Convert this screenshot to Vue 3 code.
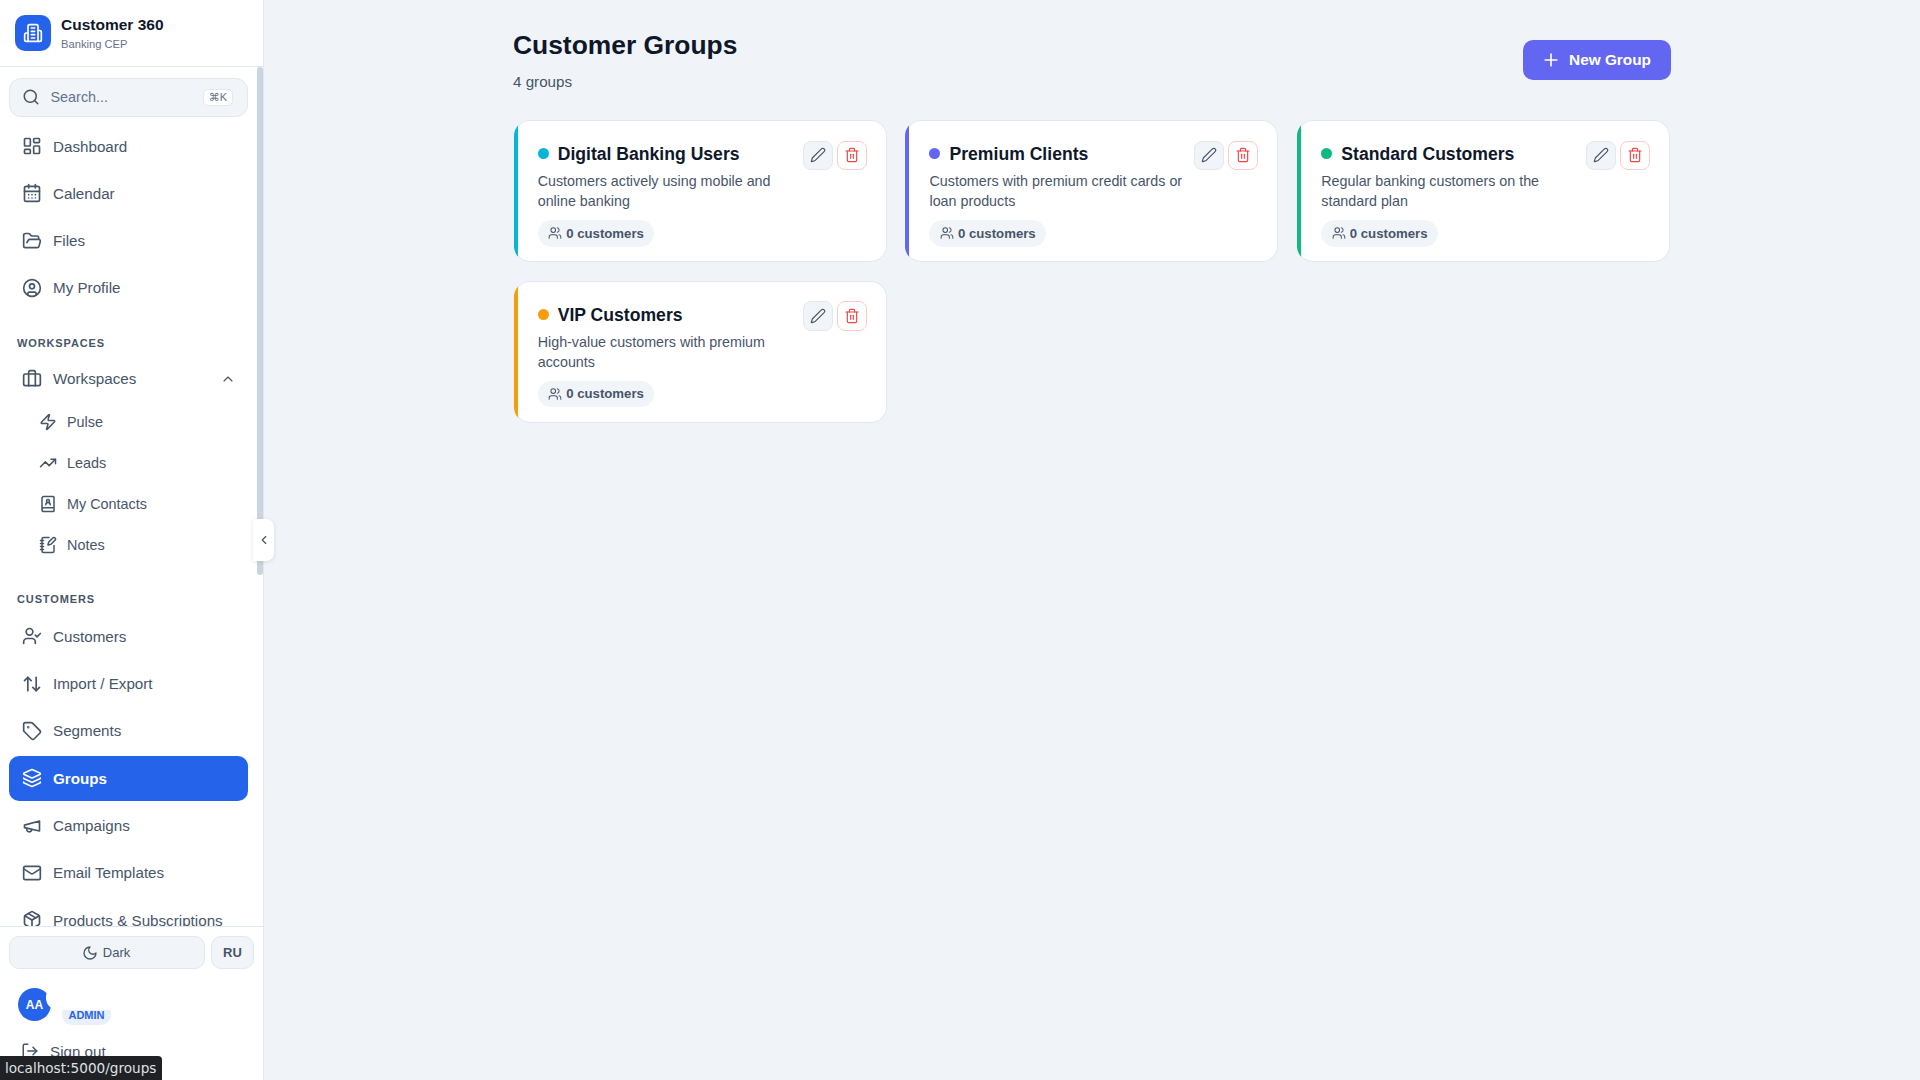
<script setup>
const icons = {
  building: '<path d="M6 22V4a2 2 0 0 1 2-2h8a2 2 0 0 1 2 2v18Z"/><path d="M6 12H4a2 2 0 0 0-2 2v6a2 2 0 0 0 2 2h2"/><path d="M18 9h2a2 2 0 0 1 2 2v9a2 2 0 0 1-2 2h-2"/><path d="M10 6h4"/><path d="M10 10h4"/><path d="M10 14h4"/><path d="M10 18h4"/>',
  search: '<circle cx="11" cy="11" r="8"/><path d="m21 21-4.3-4.3"/>',
  dashboard: '<rect x="3" y="3" width="7" height="9" rx="1"/><rect x="14" y="3" width="7" height="5" rx="1"/><rect x="14" y="12" width="7" height="9" rx="1"/><rect x="3" y="16" width="7" height="5" rx="1"/>',
  calendar: '<path d="M8 2v4"/><path d="M16 2v4"/><rect x="3" y="4" width="18" height="18" rx="2"/><path d="M3 10h18"/><path d="M8 14h.01"/><path d="M12 14h.01"/><path d="M16 14h.01"/><path d="M8 18h.01"/><path d="M12 18h.01"/><path d="M16 18h.01"/>',
  folder: '<path d="m6 14 1.5-2.9A2 2 0 0 1 9.24 10H20a2 2 0 0 1 1.94 2.5l-1.54 6a2 2 0 0 1-1.95 1.5H4a2 2 0 0 1-2-2V5a2 2 0 0 1 2-2h3.9a2 2 0 0 1 1.69.9l.81 1.2a2 2 0 0 0 1.67.9H18a2 2 0 0 1 2 2v2"/>',
  profile: '<circle cx="12" cy="12" r="10"/><circle cx="12" cy="10" r="3"/><path d="M7 20.662V19a2 2 0 0 1 2-2h6a2 2 0 0 1 2 2v1.662"/>',
  briefcase: '<path d="M16 20V4a2 2 0 0 0-2-2h-4a2 2 0 0 0-2 2v16"/><rect x="2" y="6" width="20" height="14" rx="2"/>',
  chevronUp: '<path d="m18 15-6-6-6 6"/>',
  chevronLeft: '<path d="m15 18-6-6 6-6"/>',
  zap: '<path d="M4 14a1 1 0 0 1-.78-1.63l9.9-10.2a.5.5 0 0 1 .86.46l-1.92 6.02A1 1 0 0 0 13 10h7a1 1 0 0 1 .78 1.63l-9.9 10.2a.5.5 0 0 1-.86-.46l1.92-6.02A1 1 0 0 0 11 14z"/>',
  trending: '<polyline points="22 7 13.5 15.5 8.5 10.5 2 17"/><polyline points="16 7 22 7 22 13"/>',
  book: '<path d="M15 13a3 3 0 1 0-6 0"/><path d="M4 19.5v-15A2.5 2.5 0 0 1 6.5 2H19a1 1 0 0 1 1 1v18a1 1 0 0 1-1 1H6.5a1 1 0 0 1 0-5H20"/><circle cx="12" cy="8" r="2"/>',
  notebook: '<path d="M13.4 2H6a2 2 0 0 0-2 2v16a2 2 0 0 0 2 2h12a2 2 0 0 0 2-2v-7.4"/><path d="M2 6h4"/><path d="M2 10h4"/><path d="M2 14h4"/><path d="M2 18h4"/><path d="M21.378 5.626a1 1 0 1 0-3.004-3.004l-5.01 5.012a2 2 0 0 0-.506.854l-.837 2.87a.5.5 0 0 0 .62.62l2.87-.837a2 2 0 0 0 .854-.506z"/>',
  userCheck: '<path d="M16 21v-2a4 4 0 0 0-4-4H6a4 4 0 0 0-4 4v2"/><circle cx="9" cy="7" r="4"/><polyline points="16 11 18 13 22 9"/>',
  arrows: '<path d="m21 16-4 4-4-4"/><path d="M17 20V4"/><path d="m3 8 4-4 4 4"/><path d="M7 4v16"/>',
  tag: '<path d="M12.586 2.586A2 2 0 0 0 11.172 2H4a2 2 0 0 0-2 2v7.172a2 2 0 0 0 .586 1.414l8.704 8.704a2.426 2.426 0 0 0 3.42 0l6.58-6.58a2.426 2.426 0 0 0 0-3.42z"/><circle cx="7.5" cy="7.5" r=".5" fill="currentColor"/>',
  layers: '<path d="M12.83 2.18a2 2 0 0 0-1.66 0L2.6 6.08a1 1 0 0 0 0 1.83l8.58 3.91a2 2 0 0 0 1.66 0l8.58-3.9a1 1 0 0 0 0-1.83z"/><path d="M2 12a1 1 0 0 0 .58.91l8.6 3.91a2 2 0 0 0 1.65 0l8.58-3.9A1 1 0 0 0 22 12"/><path d="M2 17a1 1 0 0 0 .58.91l8.6 3.91a2 2 0 0 0 1.65 0l8.58-3.9A1 1 0 0 0 22 17"/>',
  megaphone: '<path d="m3 11 18-5v12L3 14v-3z"/><path d="M11.6 16.8a3 3 0 1 1-5.8-1.6"/>',
  mail: '<rect x="2" y="4" width="20" height="16" rx="2"/><path d="m22 7-8.97 5.7a1.94 1.94 0 0 1-2.06 0L2 7"/>',
  package: '<path d="M11 21.73a2 2 0 0 0 2 0l7-4A2 2 0 0 0 21 16V8a2 2 0 0 0-1-1.73l-7-4a2 2 0 0 0-2 0l-7 4A2 2 0 0 0 3 8v8a2 2 0 0 0 1 1.73z"/><path d="M12 22V12"/><polyline points="3.29 7 12 12 20.71 7"/><path d="m7.5 4.27 9 5.15"/>',
  moon: '<path d="M12 3a6 6 0 0 0 9 9 9 9 0 1 1-9-9Z"/>',
  logout: '<path d="M9 21H5a2 2 0 0 1-2-2V5a2 2 0 0 1 2-2h4"/><polyline points="16 17 21 12 16 7"/><line x1="21" y1="12" x2="9" y2="12"/>',
  users: '<path d="M16 21v-2a4 4 0 0 0-4-4H6a4 4 0 0 0-4 4v2"/><circle cx="9" cy="7" r="4"/><path d="M22 21v-2a4 4 0 0 0-3-3.87"/><path d="M16 3.13a4 4 0 0 1 0 7.75"/>',
  pen: '<path d="M21.174 6.812a1 1 0 0 0-3.986-3.987L3.842 16.174a2 2 0 0 0-.5.83l-1.321 4.352a.5.5 0 0 0 .623.622l4.353-1.32a2 2 0 0 0 .83-.497z"/>',
  trash: '<path d="M3 6h18"/><path d="M19 6v14c0 1-1 2-2 2H7c-1 0-2-1-2-2V6"/><path d="M8 6V4c0-1 1-2 2-2h4c1 0 2 1 2 2v2"/><line x1="10" y1="11" x2="10" y2="17"/><line x1="14" y1="11" x2="14" y2="17"/>',
  plus: '<path d="M5 12h14"/><path d="M12 5v14"/>'
}

const topNav = [
  { label: 'Dashboard', icon: 'dashboard' },
  { label: 'Calendar', icon: 'calendar' },
  { label: 'Files', icon: 'folder' },
  { label: 'My Profile', icon: 'profile' }
]
const workspaceNav = [
  { label: 'Pulse', icon: 'zap' },
  { label: 'Leads', icon: 'trending' },
  { label: 'My Contacts', icon: 'book' },
  { label: 'Notes', icon: 'notebook' }
]
const customerNav = [
  { label: 'Customers', icon: 'userCheck' },
  { label: 'Import / Export', icon: 'arrows' },
  { label: 'Segments', icon: 'tag' },
  { label: 'Groups', icon: 'layers', active: true },
  { label: 'Campaigns', icon: 'megaphone' },
  { label: 'Email Templates', icon: 'mail' },
  { label: 'Products & Subscriptions', icon: 'package' }
]
const groups = [
  { name: 'Digital Banking Users', desc: 'Customers actively using mobile and online banking', color: '#06b6d4' },
  { name: 'Premium Clients', desc: 'Customers with premium credit cards or loan products', color: '#6366f1' },
  { name: 'Standard Customers', desc: 'Regular banking customers on the standard plan', color: '#10b981' },
  { name: 'VIP Customers', desc: 'High-value customers with premium accounts', color: '#f59e0b' }
]
</script>

<template>
  <div class="app">
    <aside class="sidebar">
      <header class="brand">
        <div class="logo">
          <svg class="ic" width="20" height="20" viewBox="0 0 24 24" v-html="icons.building"></svg>
        </div>
        <div class="brand-text">
          <div class="brand-name">Customer 360</div>
          <div class="brand-sub">Banking CEP</div>
        </div>
      </header>

      <nav class="nav">
        <div class="search">
          <svg class="ic" width="18" height="18" viewBox="0 0 24 24" v-html="icons.search"></svg>
          <span class="search-text">Search...</span>
          <kbd class="kbd">⌘K</kbd>
        </div>

        <a v-for="item in topNav" :key="item.label" class="item">
          <svg class="ic" width="20" height="20" viewBox="0 0 24 24" v-html="icons[item.icon]"></svg>
          <span>{{ item.label }}</span>
        </a>

        <div class="section first">WORKSPACES</div>
        <a class="item">
          <svg class="ic" width="20" height="20" viewBox="0 0 24 24" v-html="icons.briefcase"></svg>
          <span>Workspaces</span>
          <svg class="ic chev" width="16" height="16" viewBox="0 0 24 24" v-html="icons.chevronUp"></svg>
        </a>
        <div class="subs">
          <a v-for="item in workspaceNav" :key="item.label" class="sub">
            <svg class="ic" width="18" height="18" viewBox="0 0 24 24" v-html="icons[item.icon]"></svg>
            <span>{{ item.label }}</span>
          </a>
        </div>

        <div class="section second">CUSTOMERS</div>
        <a v-for="item in customerNav" :key="item.label" class="item tall" :class="{ active: item.active }">
          <svg class="ic" width="20" height="20" viewBox="0 0 24 24" v-html="icons[item.icon]"></svg>
          <span>{{ item.label }}</span>
        </a>

        <div class="thumb"></div>
      </nav>

      <footer class="foot">
        <div class="foot-btns">
          <button class="btn dark">
            <svg class="ic" width="16" height="16" viewBox="0 0 24 24" v-html="icons.moon"></svg>
            Dark
          </button>
          <button class="btn ru">RU</button>
        </div>
        <div class="user">
          <div class="avatar">AA</div>
          <div class="user-mask"></div>
          <span class="role">ADMIN</span>
        </div>
        <a class="signout">
          <svg class="ic" width="18" height="18" viewBox="0 0 24 24" v-html="icons.logout"></svg>
          <span>Sign out</span>
        </a>
      </footer>
    </aside>

    <button class="collapse" aria-label="Collapse sidebar">
      <svg class="ic" width="14" height="14" viewBox="0 0 24 24" v-html="icons.chevronLeft"></svg>
    </button>

    <main class="main">
      <div class="container">
        <div class="head">
          <div>
            <h1 class="title">Customer Groups</h1>
            <p class="count">4 groups</p>
          </div>
          <button class="new">
            <svg class="ic" width="20" height="20" viewBox="0 0 24 24" v-html="icons.plus"></svg>
            New Group
          </button>
        </div>

        <div class="grid">
          <article v-for="g in groups" :key="g.name" class="card">
            <span class="accent" :style="{ background: g.color }"></span>
            <div class="card-body">
              <div class="card-title">
                <span class="dot" :style="{ background: g.color }"></span>
                <h3>{{ g.name }}</h3>
              </div>
              <p class="desc">{{ g.desc }}</p>
              <span class="pill">
                <svg class="ic thin" width="14" height="14" viewBox="0 0 24 24" v-html="icons.users"></svg>
                0 customers
              </span>
            </div>
            <div class="actions">
              <button class="act edit">
                <svg class="ic thin" width="16" height="16" viewBox="0 0 24 24" v-html="icons.pen"></svg>
              </button>
              <button class="act del">
                <svg class="ic thin" width="16" height="16" viewBox="0 0 24 24" v-html="icons.trash"></svg>
              </button>
            </div>
          </article>
        </div>
      </div>
    </main>

    <div class="status">localhost:5000/groups</div>
  </div>
</template>

<style>
html, body { margin: 0; height: 100%; overflow: hidden; }
</style>

<style scoped>
.app {
  display: flex;
  height: 100vh;
  position: relative;
  overflow: hidden;
  background: #f0f4f9;
  font-family: "Liberation Sans", Arial, sans-serif;
  color: #475569;
}
.ic {
  fill: none;
  stroke: currentColor;
  stroke-width: 2;
  stroke-linecap: round;
  stroke-linejoin: round;
  flex-shrink: 0;
}
.ic.thin { stroke-width: 1.75; }
.sidebar {
  width: 264px;
  flex-shrink: 0;
  box-sizing: border-box;
  background: #fff;
  border-right: 1px solid #e2e8f0;
  display: flex;
  flex-direction: column;
  overflow: hidden;
}
.brand {
  height: 67px;
  box-sizing: border-box;
  border-bottom: 1px solid #e2e8f0;
  display: flex;
  align-items: center;
  gap: 10px;
  padding: 1px 15px 0;
  flex-shrink: 0;
}
.logo {
  width: 36px;
  height: 36px;
  border-radius: 10px;
  background: #2563eb;
  color: #fff;
  display: flex;
  align-items: center;
  justify-content: center;
  margin-top: -1px;
  flex-shrink: 0;
}
.brand-name { font-size: 15.5px; font-weight: 700; color: #0f172a; line-height: 18px; }
.brand-sub { font-size: 11.2px; color: #64748b; line-height: 14px; margin-top: 3px; }

.nav {
  position: relative;
  flex: 1;
  min-height: 0;
  overflow: hidden;
  padding: 11px 15px 0 9px;
}
.thumb {
  position: absolute;
  top: 0;
  right: 0;
  width: 6px;
  height: 508px;
  border-radius: 3px;
  background: #cbd5e1;
}
.search {
  height: 39px;
  box-sizing: border-box;
  display: flex;
  align-items: center;
  gap: 10.5px;
  padding: 0 14px 1px 12px;
  margin-bottom: 6.5px;
  background: #f1f5f9;
  border: 1px solid #e2e8f0;
  border-radius: 12px;
  font-size: 14.4px;
  color: #64748b;
}
.search .ic { color: #475569; }
.search-text { flex: 1; }
.kbd {
  box-sizing: border-box;
  width: 30px;
  height: 17px;
  display: flex;
  align-items: center;
  justify-content: center;
  background: #fff;
  border: 1px solid #e2e8f0;
  border-radius: 5px;
  font-family: "Liberation Sans", "DejaVu Sans", sans-serif;
  font-size: 11px;
  color: #64748b;
}
.item {
  height: 45.28px;
  box-sizing: border-box;
  display: flex;
  align-items: center;
  gap: 11px;
  padding: 0 13px;
  margin-bottom: 2px;
  border-radius: 10px;
  font-size: 15.2px;
  color: #475569;
}
.item.tall { height: 45.33px; }
.item.active {
  background: #2563eb;
  color: #fff;
  font-weight: 700;
}
.chev { margin-left: auto; margin-right: -1px; stroke-width: 1.75; }
.subs { margin-top: -0.5px; }
.sub {
  height: 39px;
  box-sizing: border-box;
  display: flex;
  align-items: center;
  gap: 10px;
  padding-left: 30px;
  margin-bottom: 2px;
  border-radius: 8px;
  font-size: 14.4px;
  color: #475569;
}
.section {
  font-size: 11px;
  font-weight: 700;
  letter-spacing: 0.08em;
  line-height: 14px;
  color: #475569;
  padding-left: 8px;
}
.section.first { margin: 25.8px 0 5.8px; }
.section.second { margin: 27.2px 0 7.44px; }

.foot {
  height: 154px;
  flex-shrink: 0;
  box-sizing: border-box;
  border-top: 1px solid #e2e8f0;
  padding: 9px 9px 0;
  overflow: hidden;
}
.foot-btns { display: flex; gap: 6px; }
.btn {
  height: 33px;
  box-sizing: border-box;
  display: flex;
  align-items: center;
  justify-content: center;
  gap: 5px;
  background: #f1f5f9;
  border: 1px solid #e2e8f0;
  border-radius: 10px;
  font-family: inherit;
  font-size: 13px;
  color: #475569;
  padding: 0;
}
.btn.dark { width: 196px; padding-right: 2px; }
.btn.ru { width: 43px; font-weight: 700; }
.user {
  position: relative;
  height: 37px;
  margin-top: 19px;
  padding-left: 9px;
}
.avatar {
  width: 33px;
  height: 33px;
  border-radius: 50%;
  background: #2563eb;
  color: #fff;
  font-size: 12px;
  font-weight: 700;
  display: flex;
  align-items: center;
  justify-content: center;
}
.user-mask {
  position: absolute;
  left: 37px;
  top: -3px;
  width: 90px;
  height: 25px;
  background: #fff;
  border-radius: 12px;
  z-index: 1;
}
.role {
  position: absolute;
  left: 53px;
  top: 16px;
  width: 49px;
  height: 21px;
  padding-top: 5px;
  box-sizing: border-box;
  border-radius: 10px;
  background: #e9effd;
  color: #2563eb;
  font-size: 11px;
  font-weight: 700;
  text-align: center;
}
.signout {
  display: flex;
  align-items: center;
  gap: 11px;
  margin-top: 17px;
  padding-left: 12px;
  font-size: 15.2px;
  color: #475569;
}

.collapse {
  position: absolute;
  left: 253px;
  top: 519px;
  width: 21px;
  height: 42px;
  padding: 0;
  border: none;
  background: #fff;
  border-radius: 0 8px 8px 0;
  box-shadow: 0 1px 4px rgba(15, 23, 42, 0.12);
  color: #475569;
  display: flex;
  align-items: center;
  justify-content: center;
}

.main {
  flex: 1;
  min-width: 0;
}
.container {
  width: 1158px;
  margin: 0 auto;
  padding-top: 28px;
}
.head {
  display: flex;
  align-items: center;
  justify-content: space-between;
  margin-bottom: 28.4px;
}
.title {
  margin: 0;
  font-size: 26.4px;
  line-height: 34px;
  font-weight: 700;
  color: #0f172a;
}
.count {
  margin: 10px 0 0;
  font-size: 15.2px;
  line-height: 20px;
  color: #475569;
}
.new {
  height: 40px;
  display: flex;
  align-items: center;
  gap: 8px;
  padding: 0 20px 1px 18.5px;
  border: none;
  border-radius: 10px;
  background: #6366f1;
  color: #fff;
  font-family: inherit;
  font-size: 15.36px;
  font-weight: 700;
}
.grid {
  display: grid;
  grid-template-columns: repeat(3, 373px);
  column-gap: 18.8px;
  row-gap: 19.2px;
  margin-left: 0.7px;
}
.card {
  position: relative;
  overflow: hidden;
  box-sizing: border-box;
  height: 141.6px;
  display: flex;
  gap: 12px;
  background: #fff;
  box-shadow: inset 0 0 0 1px #e2e8f0;
  border-radius: 16px;
  padding: 20.2px 20px 0 24px;
}
.accent {
  position: absolute;
  left: 0;
  top: 0;
  bottom: 0;
  width: 4px;
}
.card-body { flex: 1; min-width: 0; }
.card-title {
  display: flex;
  align-items: center;
  gap: 9px;
  height: 26px;
  box-sizing: border-box;
  padding-top: 2px;
}
.dot {
  width: 11px;
  height: 11px;
  border-radius: 50%;
  flex-shrink: 0;
  margin-top: -1.2px;
}
.card-title h3 {
  margin: 0;
  font-size: 17.6px;
  font-weight: 700;
  color: #0f172a;
}
.desc {
  margin: 4.4px 0 9.3px;
  font-size: 14.3px;
  line-height: 20px;
  color: #475569;
}
.pill {
  display: inline-flex;
  align-items: center;
  gap: 4px;
  height: 26.3px;
  box-sizing: border-box;
  padding: 0 10.5px 0.7px;
  border-radius: 14px;
  background: #f1f5f9;
  font-size: 13.2px;
  font-weight: 700;
  color: #475569;
}
.actions { display: flex; gap: 4px; flex-shrink: 0; align-items: flex-start; }
.act {
  width: 30px;
  height: 29.6px;
  box-sizing: border-box;
  padding: 0;
  border-radius: 8px;
  display: flex;
  align-items: center;
  justify-content: center;
}
.edit { background: #f1f5f9; border: 1px solid #e2e8f0; color: #475569; }
.del { background: #fff; border: 1px solid #fecaca; color: #ef4444; }

.status {
  position: absolute;
  left: 0;
  bottom: 0;
  width: 162px;
  height: 24px;
  box-sizing: border-box;
  padding-left: 5px;
  background: #202124;
  border-top-right-radius: 4px;
  color: #dfe1e5;
  font-family: "DejaVu Sans", sans-serif;
  font-size: 13.6px;
  line-height: 24px;
  white-space: nowrap;
  z-index: 5;
}
</style>
